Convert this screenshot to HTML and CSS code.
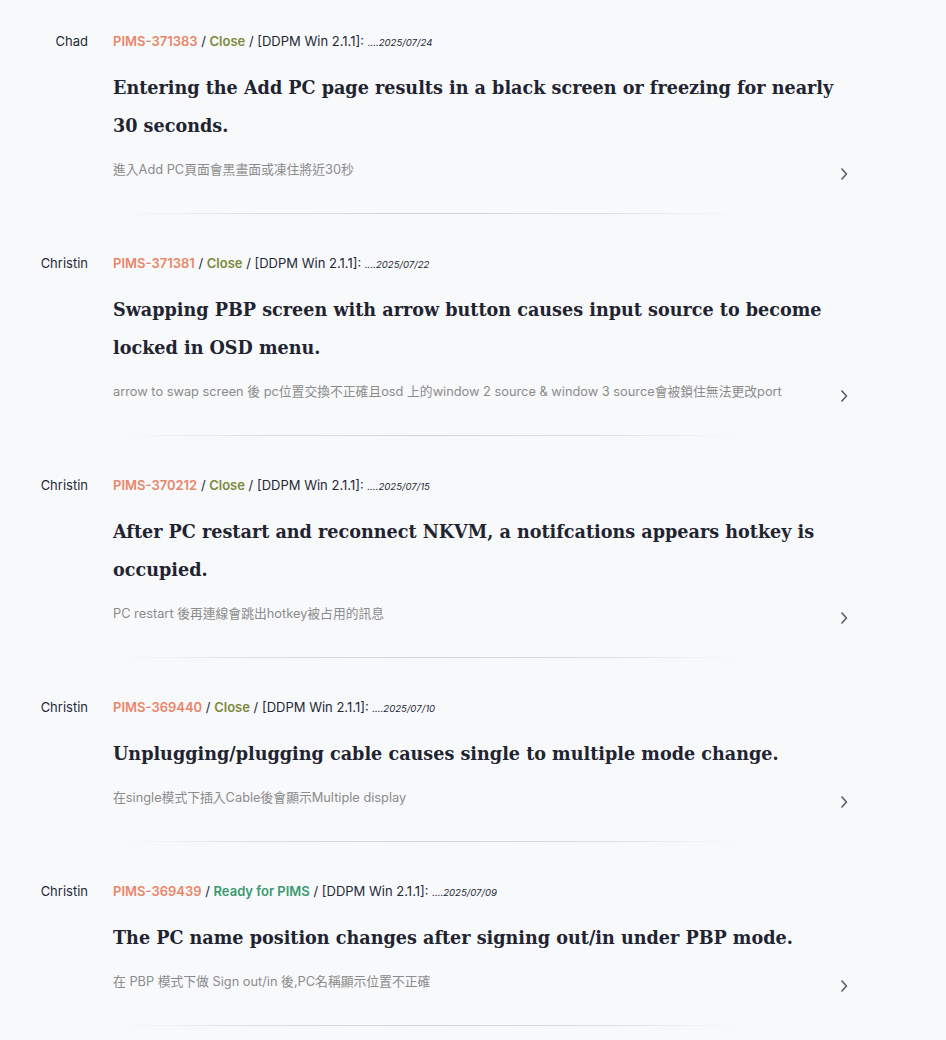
FILE: index.html
```html
<!DOCTYPE html>
<html>
<head>
<meta charset="utf-8">
<link rel="stylesheet" href="styles.css">
</head>
<body>
<div class="list">
  <div class="item">
    <div class="author">Chad</div>
    <div class="main">
      <div class="meta"><span class="pid">PIMS-371383</span> / <span class="st close">Close</span> / [DDPM Win 2.1.1]: <span class="date">....2025/07/24</span></div>
      <div class="row">
        <div class="body">
          <h2 class="title">Entering the Add PC page results in a black screen or freezing for nearly 30 seconds.</h2>
          <p class="desc">進入Add PC頁面會黑畫面或凍住將近30秒</p>
        </div>
        <svg class="chev" width="10" height="14" viewBox="0 0 10 14"><path d="M2.5 1.5 L7.5 7 L2.5 12.5" fill="none" stroke="#4b5563" stroke-width="1.4"/></svg>
      </div>
      <div class="divider"></div>
    </div>
  </div>
  <div class="item">
    <div class="author">Christin</div>
    <div class="main">
      <div class="meta"><span class="pid">PIMS-371381</span> / <span class="st close">Close</span> / [DDPM Win 2.1.1]: <span class="date">....2025/07/22</span></div>
      <div class="row">
        <div class="body">
          <h2 class="title">Swapping PBP screen with arrow button causes input source to become locked in OSD menu.</h2>
          <p class="desc">arrow to swap screen 後 pc位置交換不正確且osd 上的window 2 source &amp; window 3 source會被鎖住無法更改port</p>
        </div>
        <svg class="chev" width="10" height="14" viewBox="0 0 10 14"><path d="M2.5 1.5 L7.5 7 L2.5 12.5" fill="none" stroke="#4b5563" stroke-width="1.4"/></svg>
      </div>
      <div class="divider"></div>
    </div>
  </div>
  <div class="item">
    <div class="author">Christin</div>
    <div class="main">
      <div class="meta"><span class="pid">PIMS-370212</span> / <span class="st close">Close</span> / [DDPM Win 2.1.1]: <span class="date">....2025/07/15</span></div>
      <div class="row">
        <div class="body">
          <h2 class="title">After PC restart and reconnect NKVM, a notifcations appears hotkey is occupied.</h2>
          <p class="desc">PC restart 後再連線會跳出hotkey被占用的訊息</p>
        </div>
        <svg class="chev" width="10" height="14" viewBox="0 0 10 14"><path d="M2.5 1.5 L7.5 7 L2.5 12.5" fill="none" stroke="#4b5563" stroke-width="1.4"/></svg>
      </div>
      <div class="divider"></div>
    </div>
  </div>
  <div class="item">
    <div class="author">Christin</div>
    <div class="main">
      <div class="meta"><span class="pid">PIMS-369440</span> / <span class="st close">Close</span> / [DDPM Win 2.1.1]: <span class="date">....2025/07/10</span></div>
      <div class="row">
        <div class="body">
          <h2 class="title">Unplugging/plugging cable causes single to multiple mode change.</h2>
          <p class="desc">在single模式下插入Cable後會顯示Multiple display</p>
        </div>
        <svg class="chev" width="10" height="14" viewBox="0 0 10 14"><path d="M2.5 1.5 L7.5 7 L2.5 12.5" fill="none" stroke="#4b5563" stroke-width="1.4"/></svg>
      </div>
      <div class="divider"></div>
    </div>
  </div>
  <div class="item">
    <div class="author">Christin</div>
    <div class="main">
      <div class="meta"><span class="pid">PIMS-369439</span> / <span class="st ready">Ready for PIMS</span> / [DDPM Win 2.1.1]: <span class="date">....2025/07/09</span></div>
      <div class="row">
        <div class="body">
          <h2 class="title">The PC name position changes after signing out/in under PBP mode.</h2>
          <p class="desc">在 PBP 模式下做 Sign out/in 後,PC名稱顯示位置不正確</p>
        </div>
        <svg class="chev" width="10" height="14" viewBox="0 0 10 14"><path d="M2.5 1.5 L7.5 7 L2.5 12.5" fill="none" stroke="#4b5563" stroke-width="1.4"/></svg>
      </div>
      <div class="divider"></div>
    </div>
  </div>
</div>
</body>
</html>
```
FILE: styles.css
```css
html, body {
  margin: 0;
  padding: 0;
  background: #f8f9fb;
}
body {
  font-family: "Inter", "Noto Sans CJK TC", sans-serif;
  color: #1f2937;
}
.list {
  padding: 31px 0 0 0;
}
.item {
  display: flex;
  align-items: flex-start;
}
.author {
  width: 88px;
  text-align: right;
  font-size: 13px;
  line-height: 20px;
  color: #1f2937;
  flex: none;
}
.main {
  margin-left: 25px;
  width: 750px;
}
.meta {
  font-size: 13px;
  line-height: 20px;
  color: #1f2937;
}
.pid {
  color: #e8866a;
  font-weight: 600;
}
.st {
  font-weight: 600;
}
.st.close {
  color: #7b8a3a;
}
.st.ready {
  color: #3a9a72;
}
.date {
  font-size: 9.6px;
  font-style: italic;
}
.row {
  display: flex;
  align-items: flex-end;
}
.body {
  width: 734px;
  flex: none;
}
.title {
  margin: 16px 0 0 0;
  font-family: "DejaVu Serif", serif;
  font-weight: bold;
  font-size: 17.6px;
  line-height: 38px;
  color: #1f2430;
}
.desc {
  margin: 15px 0 0 0;
  font-size: 12.8px;
  line-height: 20px;
  color: #8b8b8b;
}
.chev {
  margin: 0 0 -1px -8px;
  flex: none;
}
.divider {
  margin: 33px 0 39px 10px;
  width: 615px;
  height: 1px;
  background: linear-gradient(to right, rgba(0,0,0,0), rgba(0,0,0,0.12) 25%, rgba(0,0,0,0.14) 50%, rgba(0,0,0,0.12) 75%, rgba(0,0,0,0));
  box-shadow: 0 2px 4px rgba(0,0,0,0.04);
}
```
